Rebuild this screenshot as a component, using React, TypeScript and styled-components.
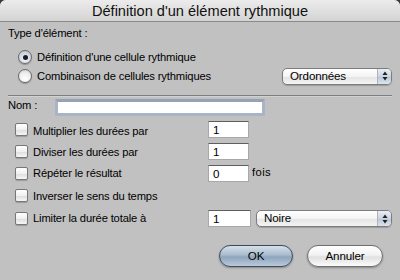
import React from "react";
import styled, { createGlobalStyle } from "styled-components";

const Global = createGlobalStyle`
  html, body { margin: 0; padding: 0; background: #3a3a3a; }
  body { font-family: "Liberation Sans", Arial, sans-serif; }
  * { box-sizing: border-box; }
`;

const Window = styled.div`
  width: 400px;
  height: 280px;
  background: #c1c1c1;
  border-radius: 6px 6px 0 0;
  overflow: hidden;
  display: flex;
  flex-direction: column;
  color: #000;
  font-size: 11.2px;
  letter-spacing: -0.15px;
`;

const TitleBar = styled.div`
  height: 22px;
  flex: none;
  display: flex;
  align-items: center;
  justify-content: center;
  background: linear-gradient(#ececec, #d3d3d3);
  border-bottom: 1px solid #8a8a8a;
  font-size: 14.6px;
  letter-spacing: 0;
  color: #111;
  padding-top: 1px;
`;

const Body = styled.div`
  flex: 1;
  display: flex;
  flex-direction: column;
  padding: 0 8px 13px 8px;
`;

const SectionLabel = styled.div`
  margin-top: 4px;
  height: 14px;
  line-height: 14px;
`;

const RadioGroup = styled.div`
  margin-top: 8px;
  display: flex;
  flex-direction: column;
  gap: 1px;
  padding-left: 10px;
`;

const Row = styled.div<{ $h?: number }>`
  height: ${(p) => p.$h ?? 18}px;
  display: flex;
  align-items: center;
`;

const Radio = styled.span<{ $on?: boolean }>`
  width: 14px;
  height: 14px;
  border-radius: 50%;
  border: 1px solid #6b6b6b;
  background: ${(p) =>
    p.$on
      ? "radial-gradient(circle at 50% 70%, #f4f6fa 0%, #c9d0da 70%, #aab2bf 100%)"
      : "radial-gradient(circle at 50% 75%, #ffffff 0%, #eeeeee 55%, #c9c9c9 100%)"};
  box-shadow: 0 1px 1px rgba(0, 0, 0, 0.25);
  display: flex;
  align-items: center;
  justify-content: center;
  margin-right: 5px;
  flex: none;
  &::after {
    content: "";
    display: ${(p) => (p.$on ? "block" : "none")};
    width: 5px;
    height: 5px;
    border-radius: 50%;
    background: #1a1a2a;
  }
`;

const Popup = styled.div<{ $w: number }>`
  margin-left: auto;
  width: ${(p) => p.$w}px;
  height: 17px;
  border: 1px solid #7c7c7c;
  border-radius: 5px;
  background: linear-gradient(#ffffff, #f3f3f3 50%, #e3e3e3 51%, #f4f4f4);
  display: flex;
  align-items: center;
  box-shadow: 0 1px 1px rgba(0, 0, 0, 0.2);
  overflow: hidden;
`;

const PopupText = styled.span`
  flex: 1;
  padding-left: 7px;
  line-height: 15px;
  margin-top: -2px;
  font-size: 11.6px;
`;

const Stepper = styled.span`
  width: 14px;
  height: 100%;
  border-left: 1px solid #b3b3b3;
  background: linear-gradient(#e8eef6, #c9d4e2 50%, #b8c6d8 51%, #dce5ef);
  display: flex;
  align-items: center;
  justify-content: center;
`;

const Separator = styled.div`
  margin-top: 10px;
  height: 1px;
  background: #7e7e7e;
  box-shadow: 0 1px 0 #d2d2d2;
`;

const NameRow = styled.div`
  margin-top: 3px;
  height: 17px;
  display: flex;
  align-items: center;
`;

const NameLabel = styled.span`
  width: 47px;
  margin-top: -6px;
`;

const NameInput = styled.div`
  width: 210px;
  height: 17px;
  background: #ffffff;
  border: 3px solid #a9b4c4;
  border-top-color: #97a3b5;
  border-radius: 1px;
`;

const Options = styled.div`
  margin-top: 5px;
  display: flex;
  flex-direction: column;
  gap: 5px;
  padding-left: 7px;
`;

const Check = styled.span`
  width: 13px;
  height: 13px;
  border: 1px solid #777;
  border-radius: 2px;
  background: linear-gradient(#ffffff, #f0f0f0 50%, #dcdcdc 51%, #f6f6f6);
  box-shadow: 0 1px 1px rgba(0, 0, 0, 0.2);
  margin-right: 5px;
  flex: none;
`;

const OptLabel = styled.span<{ $dy?: number }>`
  width: 175px;
  flex: none;
  margin-top: ${(p) => p.$dy ?? 0}px;
`;

const Field = styled.div<{ $w?: number }>`
  width: ${(p) => p.$w ?? 41}px;
  height: 17px;
  background: #fff;
  border: 1px solid #a8a8a8;
  border-top-color: #5e5e5e;
  padding-left: 4px;
  line-height: 16px;
  font-size: 11.6px;
  flex: none;
`;

const Suffix = styled.span`
  margin-left: 3px;
  margin-top: -4px;
  letter-spacing: 0.4px;
`;

const Buttons = styled.div`
  margin-top: auto;
  display: flex;
  justify-content: flex-end;
  gap: 14px;
  padding-right: 9px;
`;

const Button = styled.div<{ $primary?: boolean; $w: number }>`
  width: ${(p) => p.$w}px;
  height: 22px;
  border-radius: 11px;
  border: 1px solid ${(p) => (p.$primary ? "#3d4a5c" : "#6f6f6f")};
  background: ${(p) =>
    p.$primary
      ? "linear-gradient(#d6e0ea, #a9bbcd 45%, #8ea5bd 55%, #b9cadb)"
      : "linear-gradient(#ffffff, #f2f2f2 45%, #e0e0e0 55%, #fbfbfb)"};
  box-shadow: 0 1px 2px rgba(0, 0, 0, 0.3);
  display: flex;
  align-items: center;
  justify-content: center;
  padding-bottom: 2px;
  font-size: 11.6px;
`;

const Arrows = () => (
  <svg width="6" height="10" viewBox="0 0 6 10">
    <path d="M3 0.5 L5.5 4 L0.5 4 Z" fill="#222" />
    <path d="M3 9.5 L5.5 6 L0.5 6 Z" fill="#222" />
  </svg>
);

const options: { label: string; value?: string; suffix?: string; dy?: number }[] = [
  { label: "Multiplier les durées par", value: "1", dy: 3 },
  { label: "Diviser les durées par", value: "1", dy: 1 },
  { label: "Répéter le résultat", value: "0", suffix: "fois", dy: -1 },
  { label: "Inverser le sens du temps" },
];

export default function App() {
  return (
    <>
      <Global />
      <Window>
        <TitleBar>Définition d'un élément rythmique</TitleBar>
        <Body>
          <SectionLabel>Type d'élément :</SectionLabel>
          <RadioGroup>
            <Row>
              <Radio $on />
              <span>Définition d'une cellule rythmique</span>
            </Row>
            <Row>
              <Radio />
              <span>Combinaison de cellules rythmiques</span>
              <Popup $w={110}>
                <PopupText>Ordonnées</PopupText>
                <Stepper>
                  <Arrows />
                </Stepper>
              </Popup>
            </Row>
          </RadioGroup>
          <Separator />
          <NameRow>
            <NameLabel>Nom :</NameLabel>
            <NameInput />
          </NameRow>
          <Options>
            {options.map((o) => (
              <Row $h={17} key={o.label}>
                <Check />
                <OptLabel $dy={o.dy}>{o.label}</OptLabel>
                {o.value !== undefined && <Field>{o.value}</Field>}
                {o.suffix && <Suffix>{o.suffix}</Suffix>}
              </Row>
            ))}
            <Row $h={19}>
              <Check />
              <OptLabel $dy={-1}>Limiter la durée totale à</OptLabel>
              <Field $w={43}>1</Field>
              <Popup $w={136}>
                <PopupText>Noire</PopupText>
                <Stepper>
                  <Arrows />
                </Stepper>
              </Popup>
            </Row>
          </Options>
          <Buttons>
            <Button $primary $w={74}>OK</Button>
            <Button $w={76}>Annuler</Button>
          </Buttons>
        </Body>
      </Window>
    </>
  );
}
